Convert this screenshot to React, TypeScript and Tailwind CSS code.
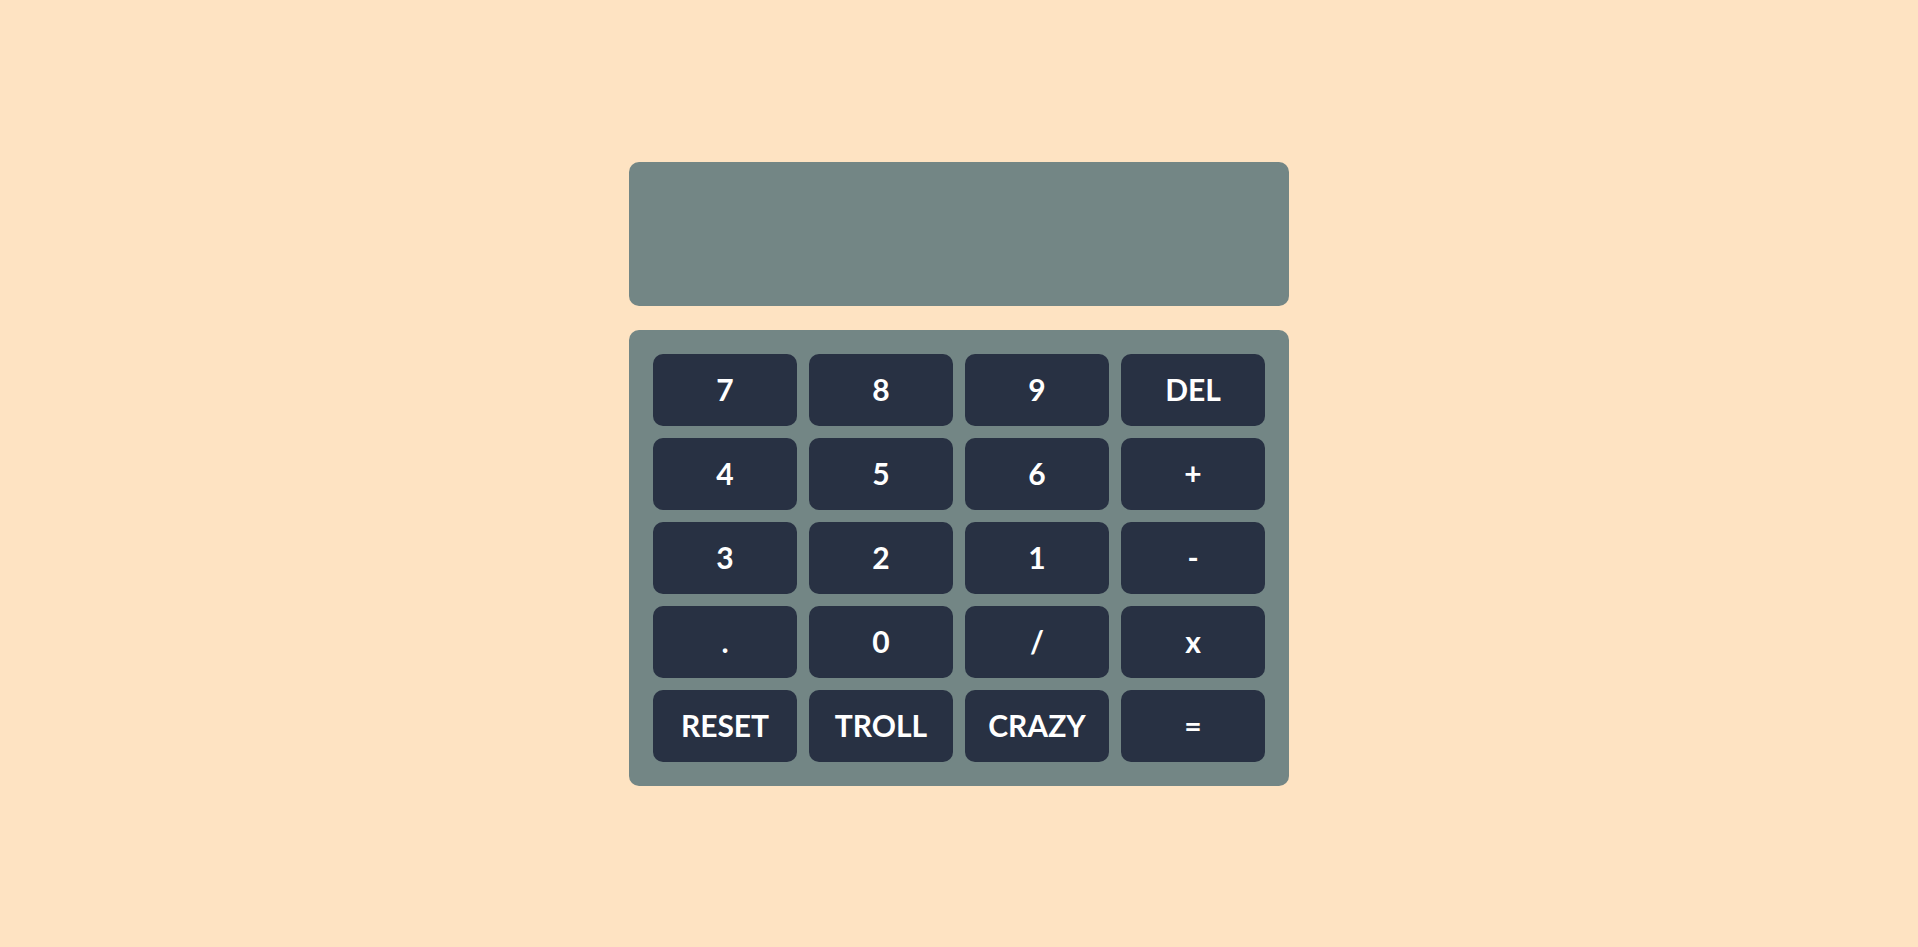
const keys = [
  "7", "8", "9", "DEL",
  "4", "5", "6", "+",
  "3", "2", "1", "-",
  ".", "0", "/", "x",
  "RESET", "TROLL", "CRAZY", "=",
];

export default function App() {
  return (
    <div className="flex min-h-screen w-full items-center justify-center bg-[#fee3c2] font-['Lato','Noto_Sans',sans-serif]">
      <div className="flex w-[660px] flex-col gap-6">
        <div className="h-[144px] w-full rounded-[10px] bg-[#738685]"></div>
        <div className="grid grid-cols-4 gap-3 rounded-[10px] bg-[#738685] p-6">
          {keys.map((k) => (
            <button
              key={k}
              className="flex h-[72px] items-center justify-center rounded-[10px] bg-[#283143] text-[30px] font-bold text-white"
            >
              {k}
            </button>
          ))}
        </div>
      </div>
    </div>
  );
}
